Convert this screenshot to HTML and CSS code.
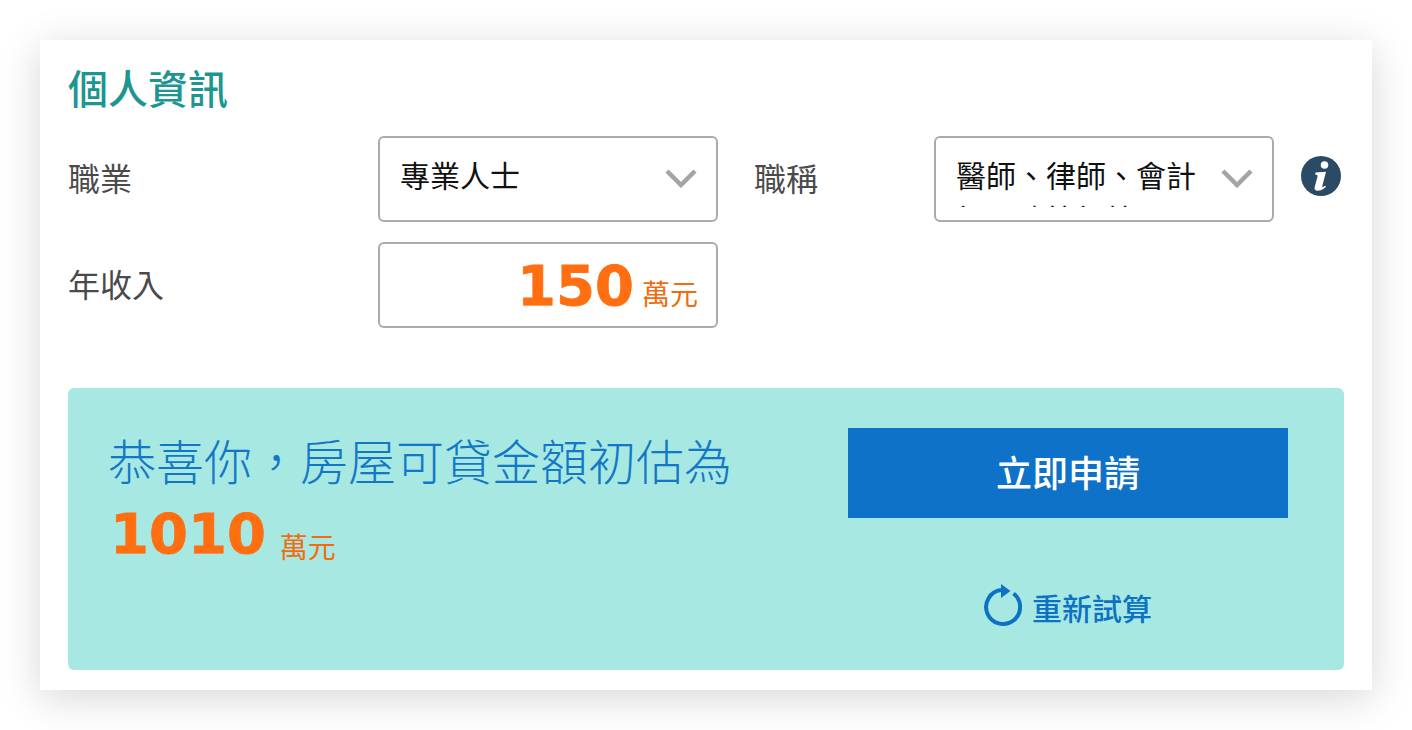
FILE: index.html
```html
<!DOCTYPE html>
<html lang="zh-Hant">
<head>
<meta charset="utf-8">
<title>個人資訊</title>
<link rel="stylesheet" href="styles.css">
</head>
<body>
<main class="card">
  <h1 class="title">個人資訊</h1>
  <div class="form">
    <div class="label">職業</div>
    <div class="field select">
      <div class="select-text">專業人士</div>
      <svg class="chev" viewBox="0 0 32 20"><path d="M2 3l14 14L30 3" fill="none" stroke="#a4a4a4" stroke-width="4.500"/></svg>
    </div>
    <div class="label label-b">職稱</div>
    <div class="field select select-b">
      <div class="select-text">醫師、律師、會計師、建築師等</div>
      <svg class="chev" viewBox="0 0 32 20"><path d="M2 3l14 14L30 3" fill="none" stroke="#a4a4a4" stroke-width="4.500"/></svg>
    </div>
    <svg class="info" viewBox="0 0 40 40">
      <circle cx="20" cy="20" r="20" fill="#2b4a66"/>
      <circle cx="23.500" cy="9" r="3.800" fill="#fff"/>
      <path d="M14.500 16.500l10.500-.8-3.700 14.300c-.3 1.200.8 1.200 3-.2l.6 1.300c-2.600 2.400-5.200 3.700-8.200 3.700-2.600 0-3.600-1.500-3-3.700l2.900-10.900c.2-1-.3-1.500-2.400-1.500z" fill="#fff"/>
    </svg>
    <div class="label">年收入</div>
    <div class="field amount"><span class="num">150</span><span class="unit">萬元</span></div>
  </div>
  <section class="result">
    <div class="result-left">
      <p class="headline">恭喜你，房屋可貸金額初估為</p>
      <p class="sum"><span class="num">1010</span><span class="unit">萬元</span></p>
    </div>
    <div class="result-right">
      <button class="apply">立即申請</button>
      <a class="reset">
        <svg class="reset-icon" viewBox="0 0 38 44"><path d="M29.500 10.500A17 17 0 1 1 17 7.100" fill="none" stroke="#0d72c4" stroke-width="4"/><path d="M17 1l9.500 7L17 15z" fill="#0d72c4"/></svg>
        <span class="reset-text">重新試算</span>
      </a>
    </div>
  </section>
</main>
</body>
</html>
```
FILE: styles.css
```css
* { box-sizing: border-box; }
html, body { margin: 0; height: 730px; overflow: hidden; background: #fff; }
body { padding: 40px; font-family: "Noto Sans CJK TC", "Liberation Sans", sans-serif; color: #4a4a4a; }
.card {
  width: 1332px;
  height: 650px;
  padding: 18px 28px 20px;
  background: #fff;
  box-shadow: 0 8px 40px rgba(0, 0, 0, .16);
  display: flex;
  flex-direction: column;
}
.title { margin: 0; font-size: 40px; line-height: 58px; font-weight: 500; color: #1d9692; }
.form {
  margin-top: 20px;
  display: grid;
  grid-template-columns: 310px 340px 216px 340px 70px;
  grid-auto-rows: 86px;
  row-gap: 20px;
  align-items: center;
}
.label { font-size: 32px; line-height: 82px; height: 86px; color: #4a4a4a; }
.label-b { padding-left: 36px; }
.field { height: 86px; border: 2px solid #ababab; border-radius: 6px; background: #fff; }
.select { position: relative; padding: 14px 0 0 20px; overflow: hidden; }
.select-b { padding-right: 74px; }
.select-text { font-size: 30px; line-height: 44px; color: #111; }
.select-b .select-text { height: 55px; overflow: hidden; }
.chev { position: absolute; right: 19px; top: 30px; width: 32px; height: 20px; }
.info { width: 40px; height: 40px; justify-self: end; margin-bottom: 6px; margin-right: 3px; }
.amount { display: flex; justify-content: flex-end; align-items: baseline; padding-right: 18px; line-height: 84px; }
.num { font-family: "DejaVu Sans", sans-serif; font-weight: 700; font-size: 56px; color: #ff6e10; -webkit-text-stroke: .8px #ff6e10; }
.unit { font-size: 28px; color: #ee6d10; margin-left: 8px; }
.result {
  margin-top: 60px;
  height: 282px;
  padding: 36px 56px 0 40px;
  background: #a8e8e2;
  border-radius: 6px;
  display: flex;
  justify-content: space-between;
}
.result-left { flex: none; }
.headline { margin: 0; font-size: 48px; font-weight: 300; line-height: 70px; color: #1278c6; }
.sum { margin: 7px 0 0 2px; height: 66px; line-height: 66px; display: flex; align-items: center; }
.sum .unit { margin-left: 14px; margin-top: 24px; }
.result-right { width: 440px; padding-top: 4px; display: flex; flex-direction: column; align-items: center; }
.apply {
  width: 440px; height: 90px; border: 0; padding: 0 0 4px;
  background: #0d72c8; color: #fff;
  font-family: inherit; font-size: 36px; font-weight: 500;
}
.reset { margin-top: 65px; display: flex; align-items: flex-start; gap: 10px; color: #0d72c4; font-size: 30px; font-weight: 500; line-height: 44px; }
.reset-icon { width: 38px; height: 44px; }
.reset-text { padding-top: 2px; }
```
